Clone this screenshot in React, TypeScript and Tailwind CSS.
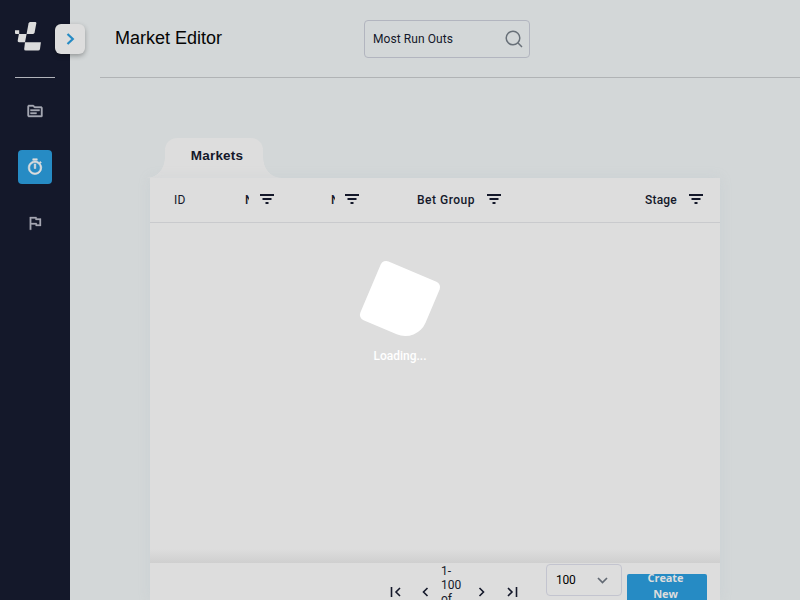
import React from "react";
import {
  MdOutlineTopic,
  MdOutlineTimer,
  MdOutlineFlag,
} from "react-icons/md";

function Logo() {
  return (
    <svg width="27" height="30" viewBox="0 0 27 30" fill="#dcdcdc" className="ml-[15px] mt-[22px]">
      <path d="M15.2 0H20.4Q21.5 0 21.3 1.2L19.6 10.6Q19.3 12 18 12H11.6L13.5 1.5Q13.8 0 15.2 0Z" />
      <path d="M0 8.3H4.2V12H11.6L10 20.2H4Q2.4 20.2 2.7 18.6L3.9 12H1Q0 12 0 11Z" />
      <path d="M10 20.2H25.9L25 27Q24.7 28.6 23.1 28.6H10.8Q9 28.6 9.2 27Z" />
    </svg>
  );
}

function Sidebar() {
  return (
    <aside className="relative flex w-[70px] shrink-0 flex-col bg-[#14182a] text-[#a5a7b2]">
      <Logo />
      <div className="mx-[15px] mt-[25px] h-px bg-[#b1b3ba]" />
      <nav className="mt-4 flex flex-col items-center gap-[22px] [&_path[fill=none]]:stroke-none">
        <span className="flex size-[34px] items-center justify-center pb-px"><MdOutlineTopic size={18} stroke="currentColor" strokeWidth={0.5} /></span>
        <span className="flex size-[34px] items-center justify-center rounded bg-[#268bc4] pb-px text-[#dddddd]"><MdOutlineTimer size={18} stroke="currentColor" strokeWidth={0.8} /></span>
        <span className="flex size-[34px] items-center justify-center pb-px"><MdOutlineFlag size={18} stroke="currentColor" strokeWidth={0.4} /></span>
      </nav>
      <button className="absolute left-[55px] top-6 flex size-[30px] items-center justify-center rounded-md bg-[#dddddd] shadow-[0_2px_5px_rgba(0,0,0,0.3)]">
        <svg width="10" height="14" viewBox="0 0 10 14" fill="none" stroke="#268bc4" strokeWidth="2.2">
          <path d="M2.5 2L7.8 7L2.5 12" />
        </svg>
      </button>
    </aside>
  );
}

function Header() {
  return (
    <header className="ml-[30px] flex h-[78px] shrink-0 items-start border-b border-[#b0b3b5] pl-[15px]">
      <h1 className="mt-6 w-[249px] font-['Liberation_Sans',sans-serif] text-[18px] leading-7 text-[#050505]">Market Editor</h1>
      <div className="mt-5 flex h-[38px] w-[166px] items-center justify-between rounded border border-[#b2b5bf] pl-2 pr-[6px]">
        <span className="text-[12px] tracking-[0.08px] text-[#14182a]">Most Run Outs</span>
        <svg width="18" height="18" viewBox="0 0 18 18" fill="none" stroke="#687078" strokeWidth="1.5">
          <circle cx="8" cy="8" r="6.8" />
          <path d="M12.8 12.8L17 17" />
        </svg>
      </div>
    </header>
  );
}

function FilterIcon() {
  return (
    <svg width="14" height="10" viewBox="0 0 14 10" fill="currentColor" className="-mt-[3px] shrink-0">
      <path d="M0 0H14V2H0ZM2.5 4H11.5V6H2.5ZM5.5 8H8.5V10H5.5Z" />
    </svg>
  );
}

function PageArrow({ direction, edge = false }: { direction: "left" | "right"; edge?: boolean }) {
  return (
    <svg
      width="12"
      height="10"
      viewBox="0 0 12 10"
      fill="none"
      stroke="currentColor"
      strokeWidth="1.6"
      className={direction === "right" ? "rotate-180" : ""}
    >
      {edge && <path d="M1.5 0V10" />}
      <path d={edge ? "M10 1L6 5L10 9" : "M8.5 1L4.5 5L8.5 9"} />
    </svg>
  );
}

function MarketTable() {
  return (
    <section className="ml-20 mt-[60px] flex h-[462px] w-[570px] flex-col text-[#14182a]">
      <div className="flex h-10 shrink-0 items-end">
        <div className="-ml-[3px] h-[20px] w-[18px] bg-[radial-gradient(ellipse_18px_20px_at_0_0,transparent_97%,#dddddd_100%)]" />
        <div className="flex h-10 w-[98px] items-center justify-center rounded-t-[12px] bg-[#dddddd] pb-[3px] pl-[6px] font-['Liberation_Sans',sans-serif] text-[13.5px] font-bold tracking-[0.2px]">
          Markets
        </div>
        <div className="h-[20px] w-[18px] bg-[radial-gradient(ellipse_18px_20px_at_100%_0,transparent_97%,#dddddd_100%)]" />
      </div>
      <div className="flex flex-1 flex-col overflow-hidden bg-[#dddddd] shadow-[0_0_12px_rgba(155,175,190,0.15)]">
        <div className="flex h-[45px] shrink-0 items-center border-b border-[#c9cacd] text-[12px] font-medium">
          <span className="w-[95px] pl-6 font-normal tracking-[0.2px]">ID</span>
          <div className="flex w-[86px] items-center">
            <span className="w-1 overflow-hidden">Name</span>
            <span className="ml-[11px]"><FilterIcon /></span>
          </div>
          <div className="flex w-[86px] items-center">
            <span className="w-1 overflow-hidden">Name</span>
            <span className="ml-[10px]"><FilterIcon /></span>
          </div>
          <div className="flex w-[84px] items-center justify-between">
            <span className="whitespace-nowrap tracking-[0.5px]">Bet Group</span>
            <FilterIcon />
          </div>
          <div className="ml-[144px] flex w-[58px] items-center justify-between">
            <span className="tracking-[0.2px]">Stage</span>
            <FilterIcon />
          </div>
        </div>
        <div className="flex h-[340px] shrink-0 flex-col items-center bg-[linear-gradient(to_top,#cfcfcf,#dddddd_14px)] pr-[70px]">
          <div className="mt-[46px] size-[64px] rotate-[23deg] rounded-[6px_6px_22px_6px] bg-white" />
          <span className="mt-[15px] text-[12px] font-medium leading-4 text-white">Loading...</span>
        </div>
        <footer className="flex h-[37px] shrink-0 items-start overflow-hidden">
          <div className="ml-[240px] mt-[24px] flex gap-[17px]">
            <PageArrow direction="left" edge />
            <PageArrow direction="left" />
          </div>
          <span className="ml-[10px] mt-[1px] w-[22px] text-[12px] leading-[14px] text-[#14182a]">1-<br />100<br />of</span>
          <div className="ml-[13px] mt-[24px] flex gap-[18px]">
            <PageArrow direction="right" />
            <PageArrow direction="right" edge />
          </div>
          <div className="ml-[28px] mt-[1px] flex h-8 w-[76px] shrink-0 items-center justify-between rounded border border-[#c3c4cf] pl-[9px] pr-[13px] text-[12px] text-black">
            <span className="tracking-[-0.2px]">100</span>
            <svg width="11" height="7" viewBox="0 0 11 7" fill="none" stroke="#626973" strokeWidth="1.7">
              <path d="M1 1L5.5 5.5L10 1" />
            </svg>
          </div>
          <button className="ml-[5px] mt-[11px] h-[40px] w-20 shrink-0 rounded-[2px] bg-[#268bc4] pr-[3px] font-['Open_Sans',sans-serif] text-[11px] font-bold leading-4 text-[#dddddd]">
            <span className="-mt-[16px] block tracking-[-0.1px]">Create<br />New</span>
          </button>
        </footer>
      </div>
    </section>
  );
}

export default function App() {
  return (
    <div className="flex h-[600px] w-[800px] overflow-hidden bg-[#d3d7d8] font-[Roboto,sans-serif]">
      <Sidebar />
      <main className="flex min-w-0 flex-1 flex-col">
        <Header />
        <MarketTable />
      </main>
    </div>
  );
}
